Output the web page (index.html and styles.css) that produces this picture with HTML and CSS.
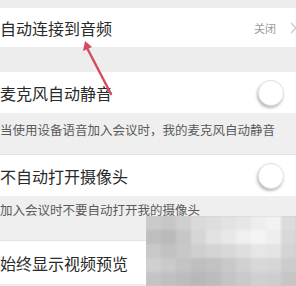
FILE: index.html
```html
<!DOCTYPE html>
<html lang="zh">
<head>
<meta charset="utf-8">
<link rel="stylesheet" href="styles.css">
</head>
<body>
<div class="page">
  <div class="band band-top"></div>
  <div class="row row-a">
    <span class="title">自动连接到音频</span>
    <span class="right">
      <span class="value">关闭</span>
      <svg class="chev" width="8" height="12" viewBox="0 0 8 12"><path d="M1 1 L6 6 L1 11" fill="none" stroke="#c8c8c8" stroke-width="1.4"/></svg>
    </span>
  </div>
  <div class="band band-mid"></div>
  <div class="row row-b">
    <span class="title">麦克风自动静音</span>
    <span class="toggle"><span class="knob"></span></span>
  </div>
  <div class="desc desc-b">当使用设备语音加入会议时，我的麦克风自动静音</div>
  <div class="row row-c">
    <span class="title">不自动打开摄像头</span>
    <span class="toggle"><span class="knob"></span></span>
  </div>
  <div class="desc desc-c">加入会议时不要自动打开我的摄像头</div>
  <div class="row row-d">
    <span class="title">始终显示视频预览</span>
  </div>
  <div class="band band-bottom"></div>

  <svg class="arrow" width="296" height="286" viewBox="0 0 296 286">
    <line x1="86" y1="46" x2="111" y2="94" stroke="#d64a5c" stroke-width="2.4" stroke-linecap="round"/>
    <polygon points="85,41 83,51 92,47" fill="#d64a5c"/>
  </svg>

  <div class="mosaic">
    <div class="cells">
      <span style="background:#cacaca"></span><span style="background:#c6c6c6"></span><span style="background:#cfcfcf"></span><span style="background:#dadada"></span><span style="background:#dedede"></span><span style="background:#e2e2e2"></span><span style="background:#e6e6e6"></span><span style="background:#eeeeee"></span><span style="background:#f2f2f2"></span><span style="background:#dcdcdc"></span>
      <span style="background:#bebebe"></span><span style="background:#bababa"></span><span style="background:#c6c6c6"></span><span style="background:#d6d6d6"></span><span style="background:#e2e2e2"></span><span style="background:#e8e8e8"></span><span style="background:#f0f0f0"></span><span style="background:#f4f4f4"></span><span style="background:#eeeeee"></span><span style="background:#d8d8d8"></span>
      <span style="background:#c8c8c8"></span><span style="background:#c2c2c2"></span><span style="background:#c8c8c8"></span><span style="background:#cfcfcf"></span><span style="background:#d4d4d4"></span><span style="background:#d8d8d8"></span><span style="background:#dedede"></span><span style="background:#e6e6e6"></span><span style="background:#e4e4e4"></span><span style="background:#d4d4d4"></span>
      <span style="background:#d0d0d0"></span><span style="background:#cacaca"></span><span style="background:#c4c4c4"></span><span style="background:#bfbfbf"></span><span style="background:#c2c2c2"></span><span style="background:#c8c8c8"></span><span style="background:#d0d0d0"></span><span style="background:#d8d8d8"></span><span style="background:#d6d6d6"></span><span style="background:#cccccc"></span>
      <span style="background:#c4c4c4"></span><span style="background:#c0c0c0"></span><span style="background:#bcbcbc"></span><span style="background:#b8b8b8"></span><span style="background:#bcbcbc"></span><span style="background:#c4c4c4"></span><span style="background:#cacaca"></span><span style="background:#d0d0d0"></span><span style="background:#cecece"></span><span style="background:#c6c6c6"></span>
    </div>
  </div>
</div>
</body>
</html>
```

FILE: styles.css
```css
html, body {
  margin: 0;
  padding: 0;
  background: #ffffff;
}
body {
  font-family: "Noto Sans CJK SC", "Noto Sans", sans-serif;
  color: #2a2a2a;
}
.page {
  position: relative;
  width: 296px;
  height: 286px;
  overflow: hidden;
  display: flex;
  flex-direction: column;
  background: #ededed;
}
.band {
  background: #ededed;
  flex: none;
}
.band-top { height: 8px; }
.band-mid { height: 25px; }
.band-bottom { height: 2px; }
.row {
  flex: none;
  background: #ffffff;
  display: flex;
  align-items: center;
  justify-content: space-between;
  box-sizing: border-box;
}
.row-a { height: 39px; }
.row-b { height: 41px; }
.row-c { height: 41px; }
.row-d { height: 43px; }
.title {
  font-size: 16px;
  line-height: 18px;
  color: #2a2a2a;
  white-space: nowrap;
}
.right {
  display: flex;
  align-items: center;
  margin-right: -2px;
}
.value {
  font-size: 11px;
  line-height: 12px;
  color: #9a9a9a;
}
.chev {
  margin-left: 14px;
  display: block;
}
.toggle {
  width: 26px;
  height: 26px;
  margin-right: 12px;
  display: flex;
}
.knob {
  width: 26px;
  height: 26px;
  border-radius: 50%;
  background: #ffffff;
  box-sizing: border-box;
  border: 1px solid #e2e2e2;
  box-shadow: -1px 2px 3px rgba(0, 0, 0, 0.28);
}
.desc {
  flex: none;
  background: #efefef;
  font-size: 12.5px;
  line-height: 14px;
  color: #5a5a5a;
  white-space: nowrap;
  box-sizing: border-box;
  border-bottom: 1px solid #e4e4e4;
}
.desc-b { height: 42px; padding-top: 10px; }
.desc-c { height: 45px; padding-top: 7px; }
.arrow {
  position: absolute;
  left: 0;
  top: 0;
  pointer-events: none;
}
.mosaic {
  position: absolute;
  left: 146px;
  top: 216px;
  width: 150px;
  height: 70px;
  overflow: hidden;
  background: #cccccc;
}
.cells {
  margin: -4px;
  padding: 4px;
  display: grid;
  grid-template-columns: repeat(10, 15px);
  grid-template-rows: repeat(5, 14px);
  filter: blur(1.2px);
}
.cells span {
  display: block;
}
```
